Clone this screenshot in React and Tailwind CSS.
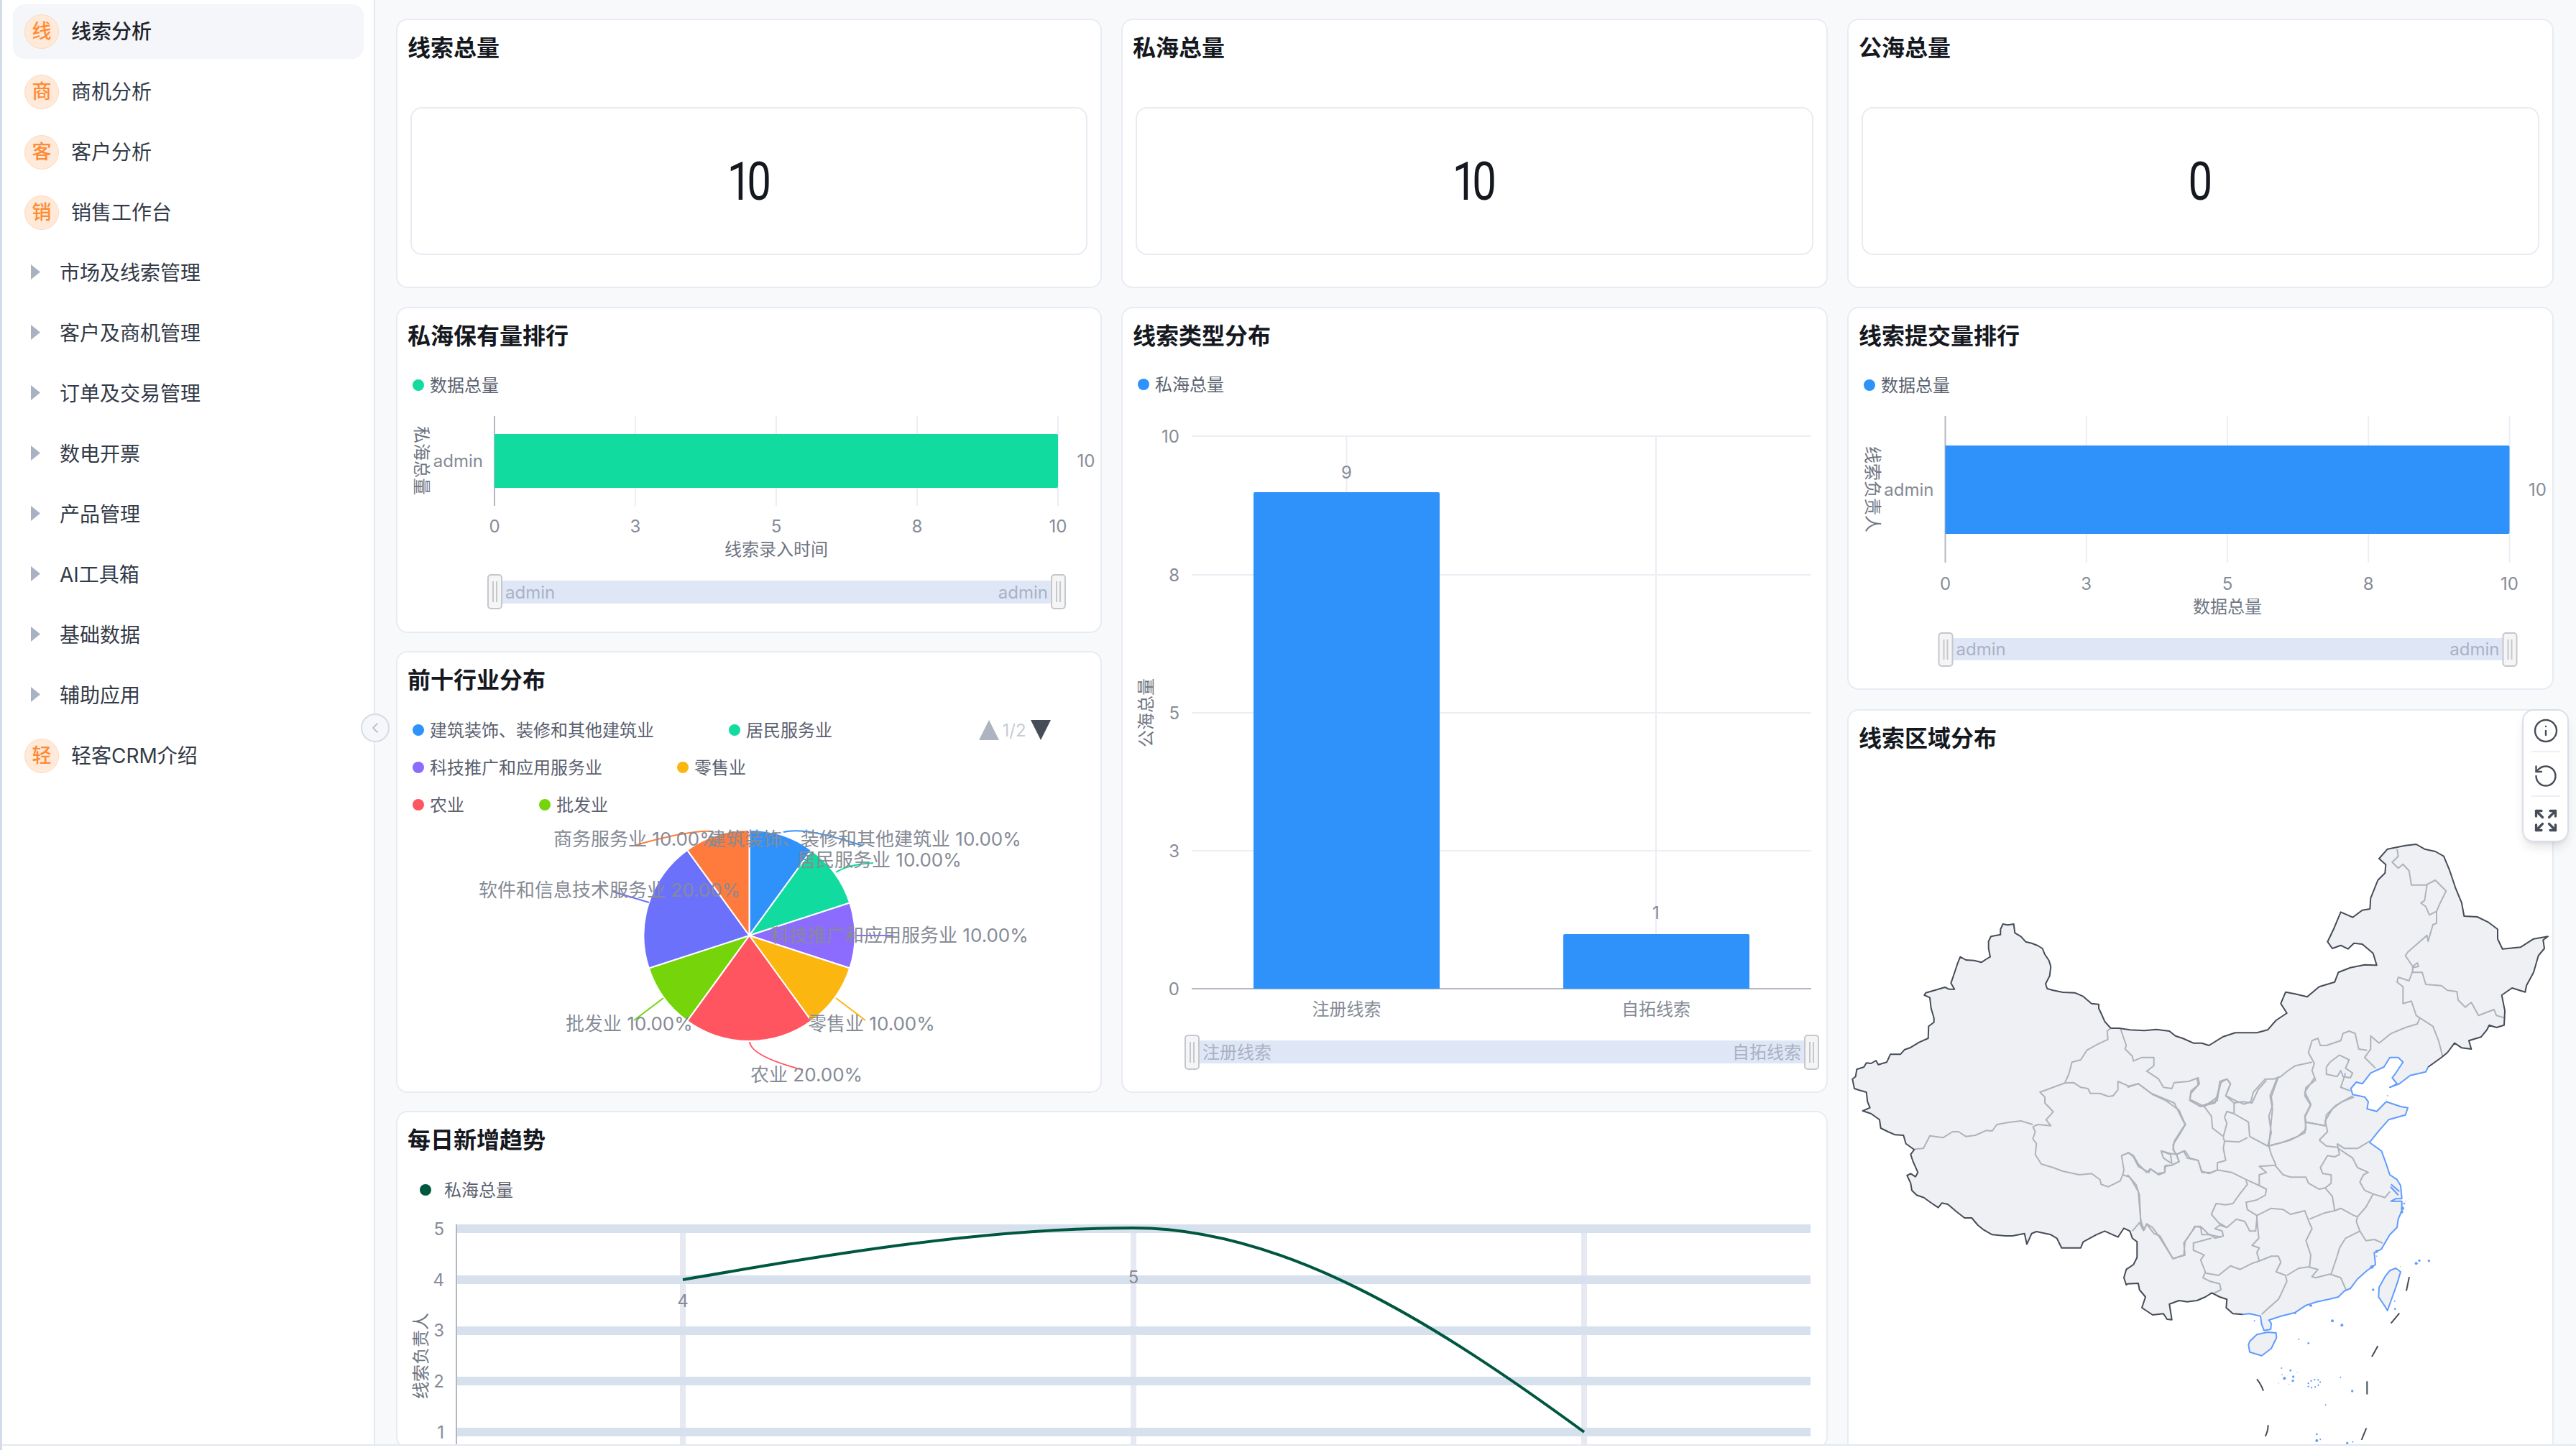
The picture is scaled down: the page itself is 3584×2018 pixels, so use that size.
import { ChevronLeft, Expand, Info, RotateCcw } from 'lucide-react'

const analysisItems = [
  { badge: '线', label: '线索分析', active: true },
  { badge: '商', label: '商机分析' },
  { badge: '客', label: '客户分析' },
  { badge: '销', label: '销售工作台' },
]
const groupItems = ['市场及线索管理', '客户及商机管理', '订单及交易管理', '数电开票', '产品管理', 'AI工具箱', '基础数据', '辅助应用']

const z8 = ([x, y]) => [2570 + x / 3, 1270 + y / 3]
const z9 = ([x, y]) => [3060 + x / 3, 1150 + y / 3]
const z10 = ([x, y]) => [2960 + x / 3, 1500 + y / 3]

function toPoints(zoom, flat) {
  const out = []
  for (let i = 0; i < flat.length; i += 2) out.push(zoom([flat[i], flat[i + 1]]).map((n) => n.toFixed(1)).join(','))
  return out
}

const westBorder = toPoints(z8, [1100,483,1075,455,1062,425,1050,400,1050,383,1020,380,985,350,950,335,900,333,860,325,835,318,828,298,845,265,850,225,842,200,825,175,815,150,795,138,770,128,745,122,725,100,700,85,695,48,670,52,650,48,640,70,640,92,600,100,590,120,590,150,597,185,580,195,560,208,530,200,495,198,472,185,460,215,445,260,433,295,448,320,425,320,408,312,375,322,328,335,322,345,345,355,350,400,362,440,362,458,340,475,338,525,300,542,262,565,240,572,222,592,180,592,165,625,130,635,120,618,100,630,80,628,70,645,40,655,35,685,22,695,30,735,50,742,80,750,85,790,95,815,65,828,100,840,135,865,140,900,170,915,200,928,235,930,245,965,280,990,265,1010,275,1040,295,1085,285,1103,265,1090,250,1098,265,1130,270,1160,290,1180,320,1190,350,1212,380,1232,395,1213,420,1218,455,1248,490,1275,520,1275,545,1305,570,1325,605,1345,660,1350,690,1350,740,1340,750,1385,770,1340,790,1332,850,1345,875,1360,895,1400,975,1400,985,1375,1040,1345,1075,1330,1130,1355,1155,1318,1180,1330,1190,1360,1210,1375,1210,1440,1195,1470,1165,1490,1155,1525,1165,1555])
  .concat(toPoints(z10, [0,860,45,858,50,885,75,915,60,960,105,990,150,985,165,1008,185,1010,175,945,215,930,250,935,290,930,325,915,352,898,385,915,415,925,412,960,440,985,480,988]))
const southCoast = toPoints(z10, [480,988,510,985,555,995,560,1030,570,1055,598,1050,600,1025,590,1012,640,995,700,980,745,950,790,935,840,925,880,915,905,890,930,880,960,840,1000,805,1035,780,1030,730,1060,715,1080,680,1095,655,1125,625,1130,590,1145,555,1145,515,1100,515,1120,505,1145,505,1140,450,1125,425,1095,405,1080,360,1060,305,1010,270])
const northCoast = toPoints(z9, [710,1320,750,1270,790,1225,860,1205,870,1175,840,1170,780,1150,740,1190,700,1180,705,1150,690,1130,640,1120,632,1095,655,1068,680,1075,715,1030,770,1005,795,965,830,965,850,985,820,1030,805,1050,825,1075,795,1090,835,1075,880,1040,945,1025,955,1005])
const eastBorder = toPoints(z9, [955,1005,1010,965,1035,945,1065,905,1095,925,1135,930,1125,895,1175,880,1200,850,1210,830,1240,840,1272,830,1275,770,1262,705,1305,675,1360,692,1365,665,1395,610,1415,540,1440,510,1435,475,1455,460,1395,470,1340,505,1265,512,1245,470,1245,430,1205,400,1160,378,1105,375,1095,320,1070,260,1045,185,1020,125,985,105,940,95,905,75,860,80,785,95,750,135,778,160,775,195,745,225,715,300,712,345,680,350,640,380,590,358,560,430,535,482,555,510,590,497,620,512,645,488,680,492,725,530,740,580,690,578,630,590,580,610,565,650,500,670,450,712,400,700,360,692,340,740,365,780,320,810,285,850,240,862,150,862,100,878,40,915])
  .concat(toPoints(z8, [1480,545,1445,545,1400,525,1370,515,1345,495,1290,488,1240,493,1180,490,1135,483,1100,483]))

const provinceLines = [
  [z8, [1100,483,1085,495,1088,530,1045,550,1000,575,975,615,938,625,925,675,908,712,805,750,825,770,825,795,860,832,830,865,850,890,795,885,775,895]],
  [z8, [282,988,318,985,345,932,400,940,440,915,465,915,495,935,535,930,580,910,605,912,625,885,680,875,725,870,775,885]],
  [z8, [775,895,785,915,775,945,790,965,785,1010,810,1050,860,1065,900,1080,970,1095,1020,1090,1055,1115,1060,1135,1090,1145,1140,1120,1150,1095,1155,1075,1145,1015,1175,1003,1195,1015,1215,1050,1250,1085,1265,1070,1300,1095,1325,1085,1325,1060,1355,1055,1385,1040,1375,1010,1410,995,1430,1025,1465,1035,1480,1080,1510,1090,1545,1075]],
  [z8, [908,712,945,710,975,730,1005,735,1015,755,1055,755,1090,768,1110,765,1130,740,1130,705,1175,725,1215,715,1275,760,1330,785,1385,825,1400,860,1412,885,1385,930,1360,970,1365,998,1375,1010,1345,1005,1310,995,1320,1025,1350,1045]],
  [z8, [1140,483,1165,555,1160,570,1190,600,1195,620,1230,605,1280,605,1280,640,1250,662,1300,695,1320,730,1355,735,1365,710,1425,705,1465,690,1470,715,1435,755,1430,785,1475,810,1535,795,1555,725]],
  [z8, [1150,1095,1180,1105,1215,1165,1225,1280,1235,1325,1220,1295,1190,1330]],
  [z8, [1235,1330,1250,1300,1280,1340,1305,1350,1360,1445,1405,1430,1410,1375,1440,1330,1450,1310,1480,1315,1510,1345,1560,1355]],
  [z10, [0,405,35,445,50,490,55,600,70,635,80,610,105,625,130,660,190,755,240,740,235,690,270,640,285,620,305,620,310,655,345,655,365,670,400,660,395,640,365,630,385,615,415,625,455,590,490,600,510,640,535,640,540,590]],
  [z10, [495,430,500,445,465,490,440,525,410,530,370,525,350,570,380,605,415,625]],
  [z10, [350,670,275,690,275,720,320,740,305,760,325,810,315,835,345,850,385,860,390,885,360,900]],
  [z10, [325,815,380,825,430,785,470,800,520,775,550,765,600,745,630,745,640,770,620,810,660,825,665,850,640,905,630,925,590,960,560,988]],
  [z10, [665,825,715,795,755,790,795,800,770,830,785,835,845,820,890,835,912,885]],
  [z10, [550,765,540,730,550,710,520,700,548,670,540,590,540,575,600,545,650,550,680,570,740,555,755,595,770,630,745,680,765,740,760,790]],
  [z10, [760,590,820,565,865,555,890,545,945,575,960,580,955,600,970,640,910,670,885,710,875,745,850,820]],
  [z10, [970,640,995,680,1030,675,1065,690]],
  [z10, [960,580,995,540,1025,485,1075,500,1095,475]],
  [z10, [540,575,500,550,495,520,540,510,575,490,580,465,550,450,550,405,580,395,550,370,615,365]],
  [z10, [615,365,650,405,680,415,745,415,755,440,800,465,825,460,855,495,865,555]],
  [z10, [825,460,850,440,850,405,815,400,805,375,835,325,865,330,885,320,875,275]],
  [z10, [880,295,940,335,960,375,1005,395,985,405,970,435,990,470,1025,485]],
  [z10, [875,275,905,295,960,295,1010,265]],
  [z10, [800,260,835,225,825,180,855,130,895,100,945,80]],
  [z10, [800,260,830,285,875,290]],
  [z10, [825,200,745,185,740,160,765,110,740,60,780,0]],
  [z10, [745,190,740,230,680,260,590,285,600,320,620,365]],
  [z10, [590,285,605,130,595,75,625,0]],
  [z10, [585,285,510,245,505,185,445,150,445,105,480,100,520,105,545,50,580,10]],
  [z10, [445,105,410,75,430,25,415,5,390,20,375,80,320,120,260,90,265,55,295,30,290,0]],
  [z10, [320,120,350,160,355,210,400,245,415,190,405,165,415,140,445,150]],
  [z10, [400,250,405,265,415,265,465,268,500,250]],
  [z10, [405,265,400,295,410,345,375,355,375,385,350,395]],
  [z10, [375,385,435,395,495,425,550,450]],
  [z10, [100,65,195,105,240,195,195,265,190,300,205,320,235,305,250,335,295,345,310,395,350,395]],
  [z10, [0,40,45,25,100,65]],
  [z10, [0,310,25,330,45,370,90,395,95,380,125,400,155,395,160,365,185,365,215,350,205,320]],
  [z10, [140,305,180,320,185,360]],
  [z9, [825,95,830,125,805,150,830,175,850,158,875,185,885,245,945,245,985,225,1030,270,1005,320,990,355,990,405,975,410,955,480,950,455,870,525,860,540,890,585,910,570,915,585,890,590,890,610]],
  [z9, [950,245,940,310,925,320,945,335,960,370,990,355]],
  [z9, [890,605,875,645,830,630,825,650,850,670,850,740,885,730,905,790,920,800,975,835,1000,900,1015,960]],
  [z9, [890,610,930,610,945,660,1010,665,1035,685,1075,690,1080,725,1110,755,1135,735,1165,790,1230,765,1240,790,1275,800]],
  [z9, [920,800,910,825,860,840,800,865,750,905,715,875,715,930,690,965,735,1010]],
  [z9, [700,935,665,930,650,865,625,855,600,865,590,895,530,915,505,915,495,885,470,895,455,945,480,990,470,1020,485,1060,445,1090,440,1125,465,1165,440,1215,445,1265,410,1295,345,1320,285,1335]],
  [z9, [470,985,400,1000,370,1020,340,1045,310,1055,275,1055,225,1110,215,1150,185,1160,150,1145,110,1125,130,1075,115,1055,85,1065,75,1145,0,1170]],
  [z9, [330,1045,300,1130,305,1165,290,1210,300,1280,285,1335]],
  [z9, [585,955,625,975,610,1010,640,1030,630,1050,600,1045,590,1020,575,1045,530,1035,530,1005,545,985,585,955]],
  [z9, [610,1030,590,1090,630,1105]],
  [z9, [640,1125,570,1165,530,1205,525,1250,445,1235]],
]

const islands = [
  [510,1100,540,1072,585,1062,620,1065,622,1085,600,1130,560,1160,510,1145,505,1115,510,1100],
  [1095,805,1120,795,1140,810,1125,860,1100,930,1085,972,1075,955,1048,915,1050,875,1075,830,1095,805],
]
const blueDots = [[1205,775,6],[1218,763,5],[1258,764,5],[855,1015,6],[895,1033,6],[530,1015,3],[715,1092,3],[755,1108,4],[1025,885,5],[1115,932,3],[1117,965,4],[643,1212,3],[680,1222,4],[655,1255,6],[692,1248,5],[690,1265,5],[889,1250,3],[938,1308,5],[827,1366,3],[790,1488,4],[790,1515,6],[805,1510,3],[917,1525,5],[940,1520,3],[1148,545,7],[1145,560,6],[1155,525,4],[1040,725,6],[1020,790,7],[765,950,6],[700,982,5]]
const grayDots = [[645,1240,3],[708,1230,2],[630,1275,2],[1160,515,2],[1175,505,2],[1085,75,3],[1140,788,2],[1080,92,2],[675,1280,2],[1040,745,3],[765,945,3]]
const nineDash = ['M1176 832L1164 890', 'M1135 983L1100 1025', 'M1045 1120L1020 1165', 'M1000 1267L1000 1322', 'M997 1463L977 1512', 'M587 1450Q587 1475 575 1497', 'M540 1258Q558 1280 567 1307']

const pieSlices = [
  { color: '#2f92fb', deg: 36 },
  { color: '#12dba0', deg: 36 },
  { color: '#8c6bff', deg: 36 },
  { color: '#fbb70f', deg: 36 },
  { color: '#ff5561', deg: 72 },
  { color: '#76d40a', deg: 36 },
  { color: '#6b71fb', deg: 72 },
  { color: '#ff7a3d', deg: 36 },
]
const pieLabels = [
  { text: '商务服务业 10.00%', x: 770, y: 1167 },
  { text: '建筑装饰、装修和其他建筑业 10.00%', x: 984, y: 1167 },
  { text: '居民服务业 10.00%', x: 1109, y: 1196 },
  { text: '软件和信息技术服务业 20.00%', x: 666, y: 1238 },
  { text: '科技推广和应用服务业 10.00%', x: 1072, y: 1301 },
  { text: '批发业 10.00%', x: 787, y: 1424 },
  { text: '零售业 10.00%', x: 1124, y: 1424 },
  { text: '农业 20.00%', x: 1044, y: 1495 },
]
const pieLeaders = [
  { color: '#2f92fb', d: 'M1090 1158Q1120 1150 1200 1177' },
  { color: '#12dba0', d: 'M1163 1214Q1180 1203 1215 1201' },
  { color: '#8c6bff', d: 'M1190 1302L1243 1302' },
  { color: '#fbb70f', d: 'M1163 1389L1204 1420' },
  { color: '#ff5561', d: 'M1043 1450Q1045 1470 1117 1489' },
  { color: '#76d40a', d: 'M923 1389L882 1420' },
  { color: '#6b71fb', d: 'M903 1256L853 1241' },
  { color: '#ff7a3d', d: 'M991 1157Q960 1155 885 1176' },
]
const legendRows = [
  { color: '#2f92fb', text: '建筑装饰、装修和其他建筑业', x: 582, y: 1016 },
  { color: '#12dba0', text: '居民服务业', x: 1022, y: 1016 },
  { color: '#8c6bff', text: '科技推广和应用服务业', x: 582, y: 1068 },
  { color: '#fbb70f', text: '零售业', x: 950, y: 1068 },
  { color: '#ff5561', text: '农业', x: 582, y: 1120 },
  { color: '#76d40a', text: '批发业', x: 758, y: 1120 },
]

function Label({ x, y, children, size = 24, fill = '#868b96', anchor = 'middle', rotate }) {
  return (
    <text
      x={x}
      y={y}
      fontSize={size}
      fill={fill}
      textAnchor={anchor}
      dominantBaseline="central"
      transform={rotate ? `rotate(${rotate} ${x} ${y})` : undefined}
    >
      {children}
    </text>
  )
}

function LegendDot({ x, y, color, children, textX }) {
  return (
    <g>
      <circle cx={x} cy={y} r="8" fill={color} />
      <Label x={textX ?? x + 16} y={y} anchor="start" fill="#5b616e">
        {children}
      </Label>
    </g>
  )
}

function Handle({ x, y, h }) {
  return (
    <g>
      <rect x={x + 1} y={y + 1} width="19" height={h - 2} rx="4" fill="#f5f5f5" stroke="#c4c7cd" strokeWidth="2" />
      <path d={`M${x + 8} ${y + 10}V${y + h - 10}M${x + 13} ${y + 10}V${y + h - 10}`} stroke="#c4c7cd" strokeWidth="2" />
    </g>
  )
}

function RangeSlider({ x0, x1, top, bottom, hTop, hBottom, left, right }) {
  return (
    <g>
      <rect x={x0} y={top} width={x1 - x0} height={bottom - top} fill="#dfe7f6" />
      <Label x={x0 + 15} y={(top + bottom) / 2} anchor="start" fill="#a9b2c4">{left}</Label>
      <Label x={x1 - 14} y={(top + bottom) / 2} anchor="end" fill="#a9b2c4">{right}</Label>
      <Handle x={x0 - 10} y={hTop} h={hBottom - hTop} />
      <Handle x={x1 - 10} y={hTop} h={hBottom - hTop} />
    </g>
  )
}

function HorizontalBar({ x, y, w, h, color, axisTop, axisBottom, labelX, rotated, rotatedY, tickY, titleY, title, sliderTop, sliderBottom, handleTop, handleBottom }) {
  const x0 = x
  const x1 = x + w
  const ticks = [['0', 0], ['3', 0.25], ['5', 0.5], ['8', 0.75], ['10', 1]]
  return (
    <g>
      {ticks.slice(1).map(([t, p]) => (
        <line key={t} x1={x0 + w * p} x2={x0 + w * p} y1={axisTop} y2={axisBottom} stroke="#eceef4" strokeWidth="2" />
      ))}
      <line x1={x0} x2={x0} y1={axisTop} y2={axisBottom} stroke="#b3b7bf" strokeWidth="2" />
      <path d={`M${x0} ${y}H${x1 - 2}Q${x1} ${y} ${x1} ${y + 2}V${y + h - 2}Q${x1} ${y + h} ${x1 - 2} ${y + h}H${x0}Z`} fill={color} />
      <Label x={x1 + 39} y={y + h / 2}>10</Label>
      <Label x={x0 - 16} y={y + h / 2} anchor="end">admin</Label>
      <Label x={labelX} y={rotatedY} rotate={90} fill="#6f7582">{rotated}</Label>
      {ticks.map(([t, p]) => (
        <Label key={t} x={x0 + w * p} y={tickY}>{t}</Label>
      ))}
      <Label x={x0 + w / 2} y={titleY} fill="#6f7582">{title}</Label>
      <RangeSlider x0={x0} x1={x1} top={sliderTop} bottom={sliderBottom} hTop={handleTop} hBottom={handleBottom} left="admin" right="admin" />
    </g>
  )
}

function PieChart() {
  let start = 0
  const cx = 1042.5
  const cy = 1302
  const r = 147
  const at = (deg) => {
    const rad = ((deg - 90) * Math.PI) / 180
    return [cx + r * Math.cos(rad), cy + r * Math.sin(rad)]
  }
  return (
    <g>
      {pieSlices.map((slice) => {
        const [ax, ay] = at(start)
        const [bx, by] = at(start + slice.deg)
        start += slice.deg
        return (
          <path
            key={slice.color}
            d={`M${cx} ${cy}L${ax} ${ay}A${r} ${r} 0 0 1 ${bx} ${by}Z`}
            fill={slice.color}
            stroke="#fff"
            strokeWidth="2"
          />
        )
      })}
      {pieLeaders.map((leader) => (
        <path key={leader.color} d={leader.d} fill="none" stroke={leader.color} strokeWidth="2" />
      ))}
      {pieLabels.map((label) => (
        <Label key={label.text} x={label.x} y={label.y} anchor="start" size={26}>{label.text}</Label>
      ))}
    </g>
  )
}

function ChinaMap() {
  const outline = [...westBorder, ...southCoast, ...northCoast, ...eastBorder].join(' ')
  return (
    <svg viewBox="2572 1067 979 950" className="block h-[950px] w-[979px]">
      <polygon points={outline} fill="#eff0f4" />
      <g fill="none" stroke="#aeb3bb" strokeWidth="2" strokeLinejoin="round">
        {provinceLines.map(([zoom, flat], i) => (
          <polyline key={i} points={toPoints(zoom, flat).join(' ')} />
        ))}
      </g>
      <g fill="none" stroke="#464c57" strokeWidth="2" strokeLinejoin="round">
        <polyline points={westBorder.join(' ')} />
        <polyline points={eastBorder.join(' ')} />
      </g>
      <g fill="none" stroke="#5f9bff" strokeWidth="2" strokeLinejoin="round">
        <polyline points={southCoast.join(' ')} />
        <polyline points={northCoast.join(' ')} />
        <polyline points={toPoints(z10, [1100,445,1135,475]).join(' ')} />
        <polyline points={toPoints(z10, [1098,455,1130,490]).join(' ')} />
        {islands.map((flat, i) => (
          <polygon key={i} points={toPoints(z10, flat).join(' ')} fill="#eff0f4" />
        ))}
        <ellipse cx={2960 + 778 / 3} cy={1500 + 1277 / 3} rx="9" ry="5" strokeDasharray="2 3" transform={`rotate(-20 ${2960 + 778 / 3} ${1500 + 1277 / 3})`} />
      </g>
      {blueDots.map(([x, y, r], i) => (
        <circle key={i} cx={2960 + x / 3} cy={1500 + y / 3} r={r / 3} fill="#5f9bff" />
      ))}
      {grayDots.map(([x, y, r], i) => (
        <circle key={i} cx={2960 + x / 3} cy={1500 + y / 3} r={r / 3} fill="#aeb3bb" />
      ))}
      {nineDash.map((d) => {
        return (
          <g key={d} transform="translate(2960 1500) scale(0.3333)">
            <path d={d} fill="none" stroke="#464c57" strokeWidth="6" />
          </g>
        )
      })}
    </svg>
  )
}

function Card({ title, className, children }) {
  return (
    <section className={`shrink-0 overflow-hidden rounded-2xl border-2 border-[#e8ebf2] bg-white ${className}`}>
      <h3 className="flex h-[78px] items-center pl-[14px] text-[32px] font-semibold text-[#15181e]">{title}</h3>
      {children}
    </section>
  )
}

function StatCard({ title, value, width }) {
  return (
    <Card title={title} className={`h-[375px] ${width}`}>
      <div className="mx-[18px] mt-[43px] flex h-[206px] items-center justify-center rounded-2xl border-2 border-[#e8ebf2]">
        <span className="-ml-[6px] scale-x-[0.8] font-['Roboto',sans-serif] text-[75px] leading-none tracking-[-8px] text-[#15181e]">{value}</span>
      </div>
    </Card>
  )
}

function Sidebar() {
  return (
    <aside className="relative h-full w-[519px] shrink-0 border-r-2 border-[#e6e9f1] bg-white pl-[15px] pt-[6px]">
      {analysisItems.map((item) => (
        <MenuRow key={item.label} item={item} />
      ))}
      {groupItems.map((label) => (
        <div key={label} className="mb-[8px] flex h-[76px] w-[488px] items-center gap-[27px] pl-[25px] text-[28px] text-[#333a47]">
          <svg width="13" height="21" viewBox="0 0 13 21" className="-mt-[4px] shrink-0">
            <polygon points="0,0 13,10.5 0,21" fill="#a9b2c3" />
          </svg>
          <span>{label}</span>
        </div>
      ))}
      <MenuRow item={{ badge: '轻', label: '轻客CRM介绍' }} />
      <button
        type="button"
        className="absolute left-[499px] top-[993px] flex h-[40px] w-[40px] items-center justify-center rounded-full border-2 border-[#d5dbe8] bg-[#f5f7fb] text-[#a9b2c3]"
      >
        <ChevronLeft size={24} strokeWidth={1.5} />
      </button>
    </aside>
  )
}

function MenuRow({ item }) {
  return (
    <div
      className={`mb-[8px] flex h-[76px] w-[488px] items-center gap-[17px] rounded-2xl pl-[16px] text-[28px] ${
        item.active ? 'bg-[#f4f6fa] font-medium text-[#1f2329]' : 'text-[#333a47]'
      }`}
    >
      <span className="flex h-[48px] w-[48px] shrink-0 items-center justify-center rounded-full border border-[#ffd9bd] bg-[#ffe9d9] text-[27px] font-medium text-[#ff8a33]">
        {item.badge}
      </span>
      <span>{item.label}</span>
    </div>
  )
}

export default function App() {
  return (
    <div className="flex h-[2018px] w-[3584px] flex-col overflow-hidden border-l-[3px] border-[#d5dbe8] bg-white font-['Inter','Noto_Sans_CJK_SC',sans-serif]">
      <div className="flex h-[2010px] shrink-0">
        <Sidebar />
        <main className="flex h-full flex-1 gap-[27px] overflow-hidden bg-[#f8f9fb] pl-[29px] pt-[26px]">
          <div className="flex w-[1992px] shrink-0 flex-col gap-[25px]">
            <div className="flex shrink-0 gap-[27px]">
              <StatCard title="线索总量" value="10" width="w-[982px]" />
              <StatCard title="私海总量" value="10" width="w-[983px]" />
            </div>
            <div className="mt-[1px] flex shrink-0 gap-[27px]">
              <div className="flex w-[982px] flex-col gap-[25px]">
                <Card title="私海保有量排行" className="h-[454px]">
                  <svg viewBox="553 507 978 372" className="block h-[372px] w-[978px]">
                    <LegendDot x={582} y={536} color="#12dba0">数据总量</LegendDot>
                    <HorizontalBar
                      x={688} y={604} w={784} h={75} color="#12dba0"
                      axisTop={579} axisBottom={704} labelX={586} rotated="私海总量" rotatedY={641}
                      tickY={732} titleY={764} title="线索录入时间"
                      sliderTop={808} sliderBottom={840} handleTop={799} handleBottom={848}
                    />
                  </svg>
                </Card>
                <Card title="前十行业分布" className="h-[615px]">
                  <svg viewBox="553 986 978 533" className="block h-[533px] w-[978px]">
                    {legendRows.map((row) => (
                      <LegendDot key={row.text} x={row.x} y={row.y} color={row.color}>{row.text}</LegendDot>
                    ))}
                    <polygon points="1376,1002 1390,1030 1362,1030" fill="#aeb4bf" />
                    <Label x={1411} y={1016} fill="#c8ccd4">1/2</Label>
                    <polygon points="1434,1002 1462,1002 1448,1030" fill="#474d58" />
                    <PieChart />
                  </svg>
                </Card>
              </div>
              <Card title="线索类型分布" className="h-[1094px] w-[983px]">
                <svg viewBox="1562 507 979 1012" className="block h-[1012px] w-[979px]">
                  <LegendDot x={1591} y={535} color="#2f92fb">私海总量</LegendDot>
                  {[607, 800, 992, 1184].map((y) => (
                    <line key={y} x1={1658} x2={2520} y1={y} y2={y} stroke="#eceef4" strokeWidth="2" />
                  ))}
                  <line x1={1873.5} x2={1873.5} y1={607} y2={1376} stroke="#eceef4" strokeWidth="2" />
                  <line x1={2304} x2={2304} y1={607} y2={1376} stroke="#eceef4" strokeWidth="2" />
                  <line x1={1658} x2={2520} y1={1376} y2={1376} stroke="#b3b7bf" strokeWidth="2" />
                  <path d="M1744 1376V687Q1744 685 1746 685H2001Q2003 685 2003 687V1376Z" fill="#2f92fb" />
                  <path d="M2175 1376V1302Q2175 1300 2177 1300H2432Q2434 1300 2434 1302V1376Z" fill="#2f92fb" />
                  <Label x={1873.5} y={657}>9</Label>
                  <Label x={2304} y={1270}>1</Label>
                  {[['10', 607], ['8', 800], ['5', 992], ['3', 1184], ['0', 1376]].map(([t, y]) => (
                    <Label key={t} x={1641} y={y} anchor="end">{t}</Label>
                  ))}
                  <Label x={1594} y={992} rotate={-90} fill="#6f7582">公海总量</Label>
                  <Label x={1873.5} y={1404}>注册线索</Label>
                  <Label x={2304} y={1404}>自拓线索</Label>
                  <RangeSlider x0={1658} x1={2520} top={1448} bottom={1480} hTop={1440} hBottom={1489} left="注册线索" right="自拓线索" />
                </svg>
              </Card>
            </div>
            <Card title="每日新增趋势" className="h-[470px] w-[1992px]">
              <svg viewBox="553 1626 1988 388" className="block h-[388px] w-[1988px]">
                <LegendDot x={592} y={1656} color="#00573f" textX={618}>私海总量</LegendDot>
                {[950, 1577, 2204].map((x) => (
                  <line key={x} x1={x} x2={x} y1={1710} y2={2014} stroke="#e6e9f2" strokeWidth="8" />
                ))}
                {[1710, 1781, 1852, 1922, 1993].map((y) => (
                  <line key={y} x1={635} x2={2519} y1={y} y2={y} stroke="#d7e1ee" strokeWidth="12" />
                ))}
                <line x1={635} x2={635} y1={1704} y2={2014} stroke="#b3b7bf" strokeWidth="2" />
                {[['5', 1710], ['4', 1781], ['3', 1851], ['2', 1922], ['1', 1993]].map(([t, y]) => (
                  <Label key={t} x={618} y={y} anchor="end">{t}</Label>
                ))}
                <Label x={585} y={1887} rotate={-90} fill="#6f7582">线索负责人</Label>
                <path d="M950 1781C1159 1745 1368 1709 1577 1709C1786 1709 1995 1840 2204 1993" fill="none" stroke="#00573f" strokeWidth="4" />
                <Label x={950} y={1810}>4</Label>
                <Label x={1577} y={1777}>5</Label>
              </svg>
            </Card>
          </div>
          <div className="relative flex w-[983px] shrink-0 flex-col gap-[26px]">
            <StatCard title="公海总量" value="0" width="w-[983px]" />
            <Card title="线索提交量排行" className="h-[533px] w-[983px]">
              <svg viewBox="2572 507 979 451" className="block h-[451px] w-[979px]">
                <LegendDot x={2601} y={536} color="#2f92fb">数据总量</LegendDot>
                <HorizontalBar
                  x={2706.5} y={620} w={785} h={123} color="#2f92fb"
                  axisTop={579} axisBottom={783} labelX={2605} rotated="线索负责人" rotatedY={681}
                  tickY={812} titleY={844} title="数据总量"
                  sliderTop={888} sliderBottom={919} handleTop={880} handleBottom={928}
                />
              </svg>
            </Card>
            <Card title="线索区域分布" className="mt-[1px] h-[1040px] w-[983px] border-[#cfd8e8]">
              <ChinaMap />
            </Card>
            <div className="absolute left-[939px] top-[961px] flex h-[185px] w-[65px] flex-col items-center rounded-2xl border-2 border-[#d8deea] bg-white text-[#474d58] shadow-lg">
              <span className="flex h-[58px] w-[40px] shrink-0 items-center justify-center border-b-2 border-[#eceef4]">
                <Info size={36} strokeWidth={1.6} />
              </span>
              <span className="flex h-[62px] w-[40px] shrink-0 items-center justify-center border-b-2 border-[#eceef4] pt-[6px]">
                <RotateCcw size={36} strokeWidth={1.6} />
              </span>
              <span className="flex h-[61px] w-[40px] shrink-0 items-center justify-center pt-[4px]">
                <Expand size={36} strokeWidth={2.2} />
              </span>
            </div>
          </div>
        </main>
      </div>
      <div className="h-[2px] shrink-0 bg-[#e3e7f0]" />
    </div>
  )
}
